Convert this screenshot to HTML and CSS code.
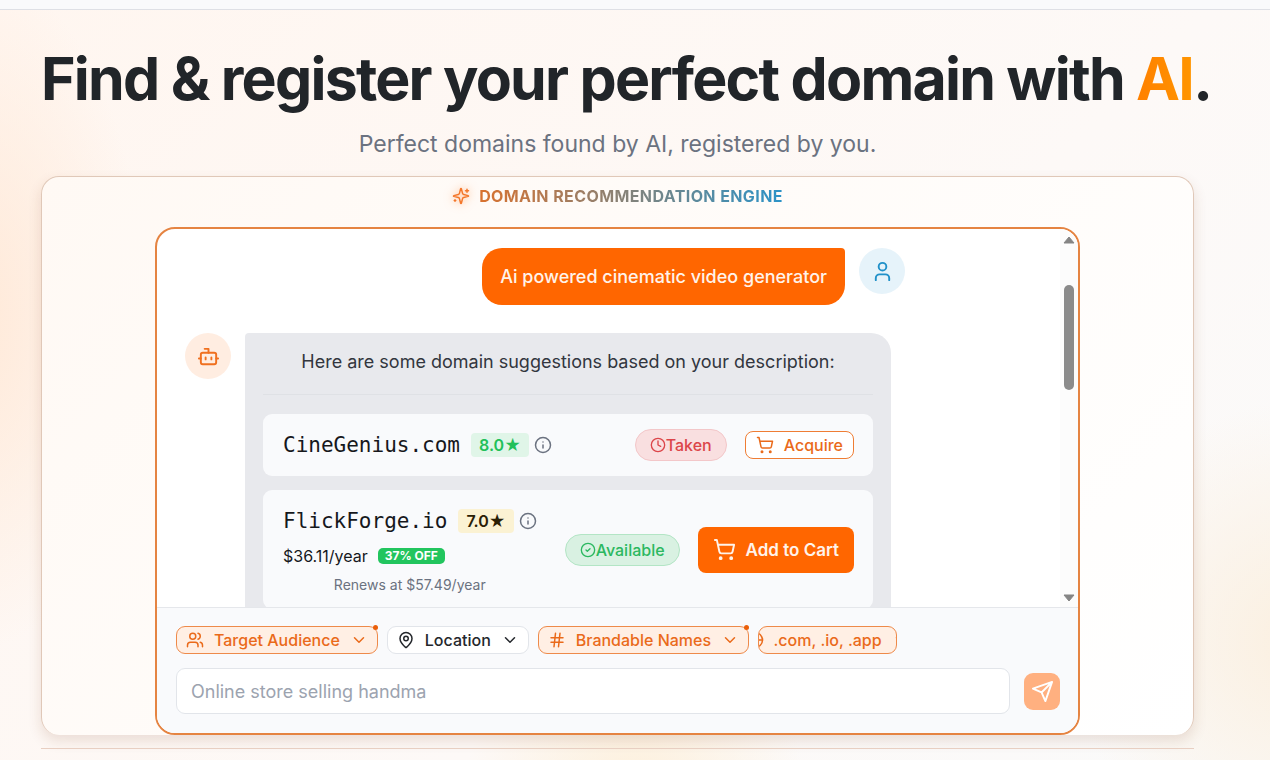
FILE: index.html
```html
<!DOCTYPE html>
<html lang="en">
<head>
    <meta charset="UTF-8">
    <meta name="viewport" content="width=device-width, initial-scale=1.0">
    <title>AI Domain Finder</title>
    <link rel="stylesheet" href="styles.css">
</head>
<body>
    <header class="topbar"></header>

    <main class="hero">
        <h1>Find &amp; register your perfect domain with <span class="accent">AI</span>.</h1>
        <p class="subtitle">Perfect domains found by AI, registered by you.</p>

        <section class="engine">
            <div class="engine-title">
                <svg class="icon spark" viewBox="0 0 24 24"><path d="M9.94 15.5A2 2 0 0 0 8.5 14.06l-6.14-1.58a.5.5 0 0 1 0-.96L8.5 9.94A2 2 0 0 0 9.94 8.5l1.58-6.14a.5.5 0 0 1 .96 0L14.06 8.5A2 2 0 0 0 15.5 9.94l6.14 1.58a.5.5 0 0 1 0 .96L15.5 14.06a2 2 0 0 0-1.44 1.44l-1.58 6.14a.5.5 0 0 1-.96 0z"/><path d="M20 3v4M22 5h-4M4 17v2M5 18H3"/></svg>
                <span>Domain Recommendation Engine</span>
            </div>

            <div class="chat">
                <div class="chat-body">
                    <div class="messages">
                        <div class="row user-row">
                            <div class="bubble user-bubble">Ai powered cinematic video generator</div>
                            <div class="avatar user-avatar">
                                <svg class="icon" viewBox="0 0 24 24"><circle cx="12" cy="7" r="4"/><path d="M19 21v-2a4 4 0 0 0-4-4H9a4 4 0 0 0-4 4v2"/></svg>
                            </div>
                        </div>

                        <div class="row bot-row">
                            <div class="avatar bot-avatar">
                                <svg class="icon" viewBox="0 0 24 24"><path d="M12 8V4H8"/><rect x="4" y="8" width="16" height="12" rx="2"/><path d="M2 14h2M20 14h2M15 13v2M9 13v2"/></svg>
                            </div>
                            <div class="bubble bot-bubble">
                                <p class="intro">Here are some domain suggestions based on your description:</p>

                                <div class="domain">
                                    <div class="domain-info">
                                        <div class="domain-name">
                                            <span class="name">CineGenius.com</span>
                                            <span class="score score-good">8.0★</span>
                                            <svg class="icon info" viewBox="0 0 24 24"><circle cx="12" cy="12" r="10"/><path d="M12 16v-4M12 8h.01"/></svg>
                                        </div>
                                    </div>
                                    <span class="status taken">
                                        <svg class="icon" viewBox="0 0 24 24"><circle cx="12" cy="12" r="10"/><path d="M12 6v6l4 2"/></svg>Taken
                                    </span>
                                    <button class="btn-outline">
                                        <svg class="icon" viewBox="0 0 24 24"><circle cx="8" cy="21" r="1"/><circle cx="19" cy="21" r="1"/><path d="M2 2h2l2.7 12.4a2 2 0 0 0 2 1.6h9.7a2 2 0 0 0 2-1.6L22 7H5.1"/></svg>
                                        Acquire
                                    </button>
                                </div>

                                <div class="domain">
                                    <div class="domain-info">
                                        <div class="domain-name">
                                            <span class="name">FlickForge.io</span>
                                            <span class="score score-mid">7.0★</span>
                                            <svg class="icon info" viewBox="0 0 24 24"><circle cx="12" cy="12" r="10"/><path d="M12 16v-4M12 8h.01"/></svg>
                                        </div>
                                        <div class="price">$36.11/year <span class="discount">37% OFF</span></div>
                                        <div class="renews">Renews at $57.49/year</div>
                                    </div>
                                    <span class="status available">
                                        <svg class="icon" viewBox="0 0 24 24"><circle cx="12" cy="12" r="10"/><path d="m9 12 2 2 4-4"/></svg>Available
                                    </span>
                                    <button class="btn-primary">
                                        <svg class="icon" viewBox="0 0 24 24"><circle cx="8" cy="21" r="1"/><circle cx="19" cy="21" r="1"/><path d="M2 2h2l2.7 12.4a2 2 0 0 0 2 1.6h9.7a2 2 0 0 0 2-1.6L22 7H5.1"/></svg>
                                        Add to Cart
                                    </button>
                                </div>
                            </div>
                        </div>
                    </div>

                    <div class="scrollbar">
                        <svg class="arrow" viewBox="0 0 12 10"><path d="M6 2 11 8H1z"/></svg>
                        <div class="thumb"></div>
                        <svg class="arrow arrow-down" viewBox="0 0 12 10"><path d="M1 2h10L6 8z"/></svg>
                    </div>
                </div>

                <form class="composer">
                    <div class="filters">
                        <button type="button" class="chip active">
                            <svg class="icon" viewBox="0 0 24 24"><path d="M16 21v-2a4 4 0 0 0-4-4H6a4 4 0 0 0-4 4v2"/><circle cx="9" cy="7" r="4"/><path d="M22 21v-2a4 4 0 0 0-3-3.870M16 3.130a4 4 0 0 1 0 7.750"/></svg>
                            Target Audience
                            <svg class="icon chevron" viewBox="0 0 24 24"><path d="m6 9 6 6 6-6"/></svg>
                            <span class="dot"></span>
                        </button>
                        <button type="button" class="chip">
                            <svg class="icon" viewBox="0 0 24 24"><path d="M20 10c0 5-5.540 10.190-7.400 11.800a1 1 0 0 1-1.200 0C9.540 20.190 4 15 4 10a8 8 0 0 1 16 0"/><circle cx="12" cy="10" r="3"/></svg>
                            Location
                            <svg class="icon chevron" viewBox="0 0 24 24"><path d="m6 9 6 6 6-6"/></svg>
                        </button>
                        <button type="button" class="chip active">
                            <svg class="icon" viewBox="0 0 24 24"><path d="M4 9h16M4 15h16M10 3 8 21M16 3l-2 18"/></svg>
                            Brandable Names
                            <svg class="icon chevron" viewBox="0 0 24 24"><path d="m6 9 6 6 6-6"/></svg>
                            <span class="dot"></span>
                        </button>
                        <button type="button" class="chip active chip-tlds">
                            <svg class="icon" viewBox="0 0 24 24"><circle cx="12" cy="12" r="10"/><path d="M12 2a14.500 14.500 0 0 0 0 20 14.500 14.500 0 0 0 0-20M2 12h20"/></svg>
                            .com, .io, .app
                            <svg class="icon chevron" viewBox="0 0 24 24"><path d="m6 9 6 6 6-6"/></svg>
                        </button>
                    </div>
                    <div class="input-row">
                        <input type="text" aria-label="Describe your project" placeholder="Online store selling handma">
                        <button type="button" class="send" aria-label="Send">
                            <svg class="icon" viewBox="0 0 24 24"><path d="m22 2-7 20-4-9-9-4ZM22 2 11 13"/></svg>
                        </button>
                    </div>
                </form>
            </div>
        </section>

        <hr class="divider">
    </main>
</body>
</html>
```

FILE: styles.css
```css
* { box-sizing: border-box; }
body {
    margin: 0;
    font-family: Inter, sans-serif;
    font-size: 16px;
    color: #212529;
    overflow: hidden;
}
button, input { font-family: inherit; }
.icon {
    width: 18px;
    height: 18px;
    flex: none;
    fill: none;
    stroke: currentColor;
    stroke-width: 2;
    stroke-linecap: round;
    stroke-linejoin: round;
}
.topbar {
    height: 10px;
    background: #f9fafb;
    border-bottom: 1px solid #dee0e5;
}
.hero {
    min-height: calc(100vh - 10px);
    padding: 39px 76px 10px 41px;
    background:
        radial-gradient(ellipse 170px 340px at -2% 40%, #ffe9d8 0, rgba(255, 233, 216, 0) 100%),
        radial-gradient(circle at 103% 84%, #fbefdf 0, rgba(251, 239, 223, 0) 240px),
        radial-gradient(circle at 50% 104%, #fdf0dc 0, rgba(253, 240, 220, 0) 170px),
        linear-gradient(135deg, #fff6f0 0%, #fdf9f7 60%, #fafafa 100%);
}
h1 {
    margin: 0;
    font-size: 59px;
    line-height: 60px;
    font-weight: 700;
    letter-spacing: -0.03em;
    white-space: nowrap;
}
.accent {
    background: linear-gradient(90deg, #ff8000, #ff9500);
    -webkit-background-clip: text;
    background-clip: text;
    color: transparent;
}
.subtitle {
    margin: 18px 0 15px;
    font-size: 23px;
    line-height: 34px;
    text-align: center;
    color: #6b7280;
}
.engine {
    background: linear-gradient(135deg, #fff9f4, #ffffff);
    border: 1px solid #e0c8b8;
    border-bottom: none;
    border-radius: 18px;
    box-shadow: 0 6px 14px rgba(120, 60, 20, 0.14);
}
.engine-title {
    display: flex;
    align-items: center;
    justify-content: center;
    gap: 9px;
    height: 38px;
    margin-bottom: 12px;
    font-weight: 700;
    letter-spacing: 0.025em;
    text-transform: uppercase;
}
.engine-title span {
    background: linear-gradient(90deg, #d9722f, #2b93c8);
    -webkit-background-clip: text;
    background-clip: text;
    color: transparent;
}
.spark {
    color: #f4772a;
    filter: drop-shadow(0 0 5px rgba(255, 102, 0, 0.5));
}

/* chat */
.chat {
    max-width: 925px;
    margin: 0 auto;
    border: 2px solid #e58442;
    border-radius: 20px;
    overflow: hidden;
    background: #fff;
}
.chat-body {
    display: flex;
    height: 378px;
}
.messages {
    flex: 1;
    padding: 19px 28px;
    overflow: hidden;
}
.row {
    display: flex;
    align-items: flex-start;
    gap: 14px;
    max-width: 720px;
    margin-bottom: 28px;
}
.user-row { justify-content: flex-end; }
.bot-row { padding-right: 14px; }
.avatar {
    display: flex;
    align-items: center;
    justify-content: center;
    flex: none;
    width: 46px;
    height: 46px;
    border-radius: 50%;
}
.avatar .icon {
    width: 23px;
    height: 23px;
}
.user-avatar {
    background: #e6f3fa;
    color: #2191c9;
}
.bot-avatar {
    background: #ffede1;
    color: #f0701f;
}
.bubble {
    padding: 14px 18px;
    border-radius: 20px;
    font-size: 18px;
    line-height: 29px;
}
.user-bubble {
    background: #ff6600;
    color: #fff3ea;
    font-weight: 500;
    border-top-right-radius: 4px;
}
.bot-bubble {
    flex: 1;
    background: #e8e9ed;
    border-top-left-radius: 4px;
}
.intro {
    margin: 0 0 19px;
    padding-bottom: 18px;
    border-bottom: 1px solid #dfe1e5;
    text-align: center;
    color: #32363e;
}
.domain {
    display: flex;
    align-items: center;
    gap: 18px;
    margin-bottom: 14px;
    padding: 14px 19px 14px 20px;
    background: #f9fafc;
    border-radius: 9px;
    font-size: 16px;
    line-height: 24px;
}
.domain-info {
    margin-right: auto;
    text-align: center;
}
.domain-name {
    display: flex;
    align-items: center;
    height: 34px;
}
.name {
    margin-right: 11px;
    font-family: "DejaVu Sans Mono", monospace;
    font-size: 21px;
    color: #16181c;
}
.score {
    padding: 0 8px;
    margin-right: 5px;
    border-radius: 4px;
    font-weight: 600;
}
.score-good {
    background: #e0f5e8;
    color: #22c05a;
}
.score-mid {
    background: #fbf2d3;
    color: #2a2005;
}
.info { color: #6b7280; }
.price {
    display: flex;
    align-items: center;
    gap: 10px;
    margin-top: 6px;
    color: #16181c;
}
.discount {
    padding: 0 7px;
    border-radius: 5px;
    background: #22c55e;
    color: #fff;
    font-size: 12px;
    line-height: 16px;
    font-weight: 700;
}
.renews {
    margin-top: 7px;
    font-size: 14px;
    line-height: 20px;
    color: #6b7280;
}
.status {
    display: flex;
    align-items: center;
    height: 32px;
    padding: 0 14px;
    border: 1px solid;
    border-radius: 16px;
    font-weight: 500;
}
.status .icon {
    width: 16px;
    height: 16px;
}
.taken {
    background: #f9dfe0;
    border-color: #f3c7c9;
    color: #dc4549;
}
.available {
    background: #d9f1e2;
    border-color: #b3e5c5;
    color: #2bb860;
}
.btn-outline, .btn-primary {
    display: flex;
    align-items: center;
    gap: 10px;
    cursor: pointer;
}
.btn-outline {
    height: 28px;
    padding: 0 10px;
    border: 1px solid #ef7d34;
    border-radius: 8px;
    background: #fff;
    color: #ea6a1a;
    font-size: 16px;
    font-weight: 500;
}
.btn-primary {
    height: 46px;
    padding: 0 15px;
    border: none;
    border-radius: 8px;
    background: #ff6600;
    color: #fff3ea;
    font-size: 17px;
    font-weight: 600;
}
.btn-primary .icon {
    width: 23px;
    height: 23px;
}
.scrollbar {
    display: flex;
    flex-direction: column;
    align-items: center;
    width: 18px;
    padding: 6px 0 4px;
    background: #fcfcfc;
}
.arrow {
    width: 12px;
    height: 10px;
    fill: #858585;
    stroke: #858585;
    stroke-linejoin: round;
}
.arrow-down { margin-top: auto; }
.thumb {
    width: 10px;
    height: 105px;
    margin-top: 40px;
    border-radius: 5px;
    background: #8b8b8b;
}

/* composer */
.composer {
    padding: 18px 18px 19px 19px;
    border-top: 1px solid #e5e7eb;
    background: #f9fafc;
}
.filters {
    display: flex;
    gap: 9px;
    margin-bottom: 14px;
}
.chip {
    position: relative;
    display: flex;
    align-items: center;
    justify-content: center;
    gap: 10px;
    height: 28px;
    padding: 0 9px;
    border: 1px solid #e2e5ea;
    border-radius: 9px;
    background: #fff;
    color: #24272c;
    font-size: 16px;
    font-weight: 500;
    white-space: nowrap;
    cursor: pointer;
}
.chip.active {
    background: #ffefe4;
    border-color: #ee8a4a;
    color: #ea6a1a;
}
.chip-tlds {
    width: 139px;
    overflow: hidden;
}
.dot {
    position: absolute;
    top: -2px;
    right: -1px;
    width: 5px;
    height: 5px;
    border-radius: 50%;
    background: #ea5f0a;
}
.input-row {
    display: flex;
    align-items: center;
    gap: 14px;
}
.input-row input {
    flex: 1;
    min-width: 0;
    height: 46px;
    padding: 0 14px;
    border: 1px solid #e2e5ea;
    border-radius: 9px;
    background: #fff;
    font-size: 18px;
}
.input-row input::placeholder { color: #9ca3af; }
.send {
    display: flex;
    align-items: center;
    justify-content: center;
    width: 36px;
    height: 37px;
    padding: 0;
    border: none;
    border-radius: 9px;
    background: #ffb080;
    color: #fff;
}
.send .icon {
    width: 23px;
    height: 23px;
}
.divider {
    height: 1px;
    margin: 13px 0 0;
    border: none;
    background: #e8cfc2;
}
```
